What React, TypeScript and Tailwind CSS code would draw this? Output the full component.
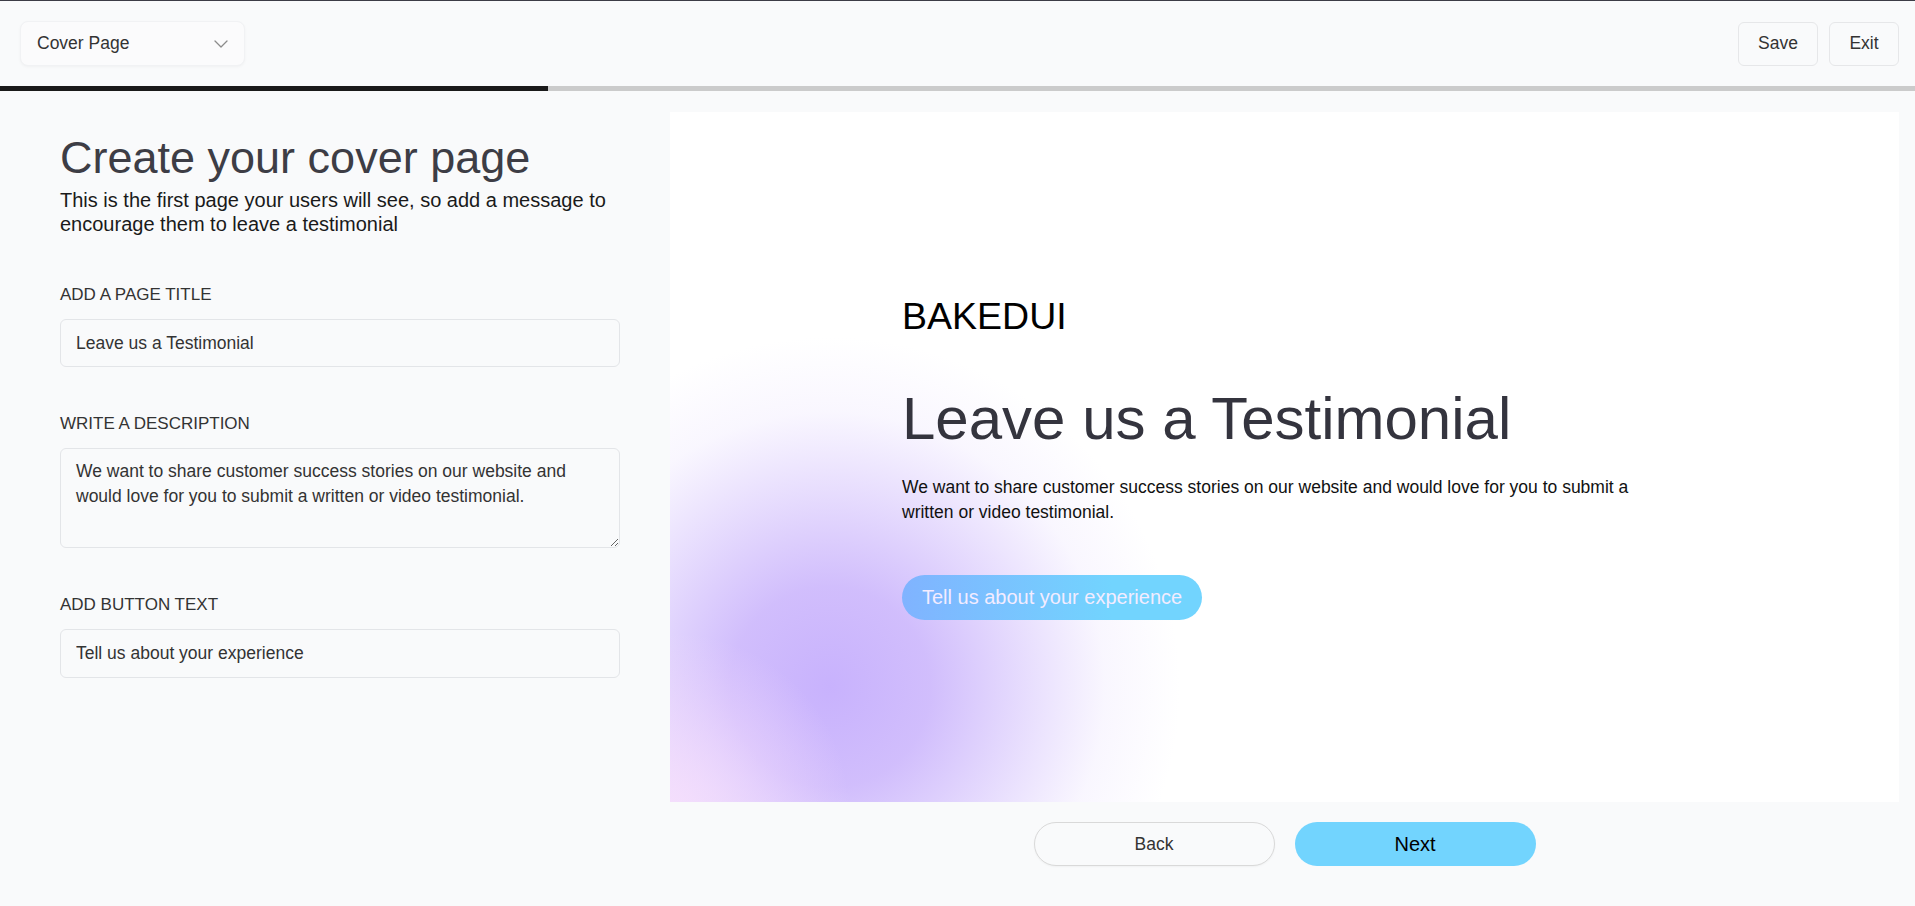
import React from "react";

function ChevronDown() {
  return (
    <svg width="14" height="8" viewBox="0 0 14 8" fill="none">
      <path d="M1 1l6 6 6-6" stroke="#8b8b8b" strokeWidth="1.3" strokeLinecap="round" strokeLinejoin="round" />
    </svg>
  );
}

function Field({ label, className, children }: { label: string; className: string; children: React.ReactNode }) {
  return (
    <div className={"flex flex-col " + className}>
      <label className="mb-[14px] text-[17px] leading-5 uppercase text-[#333]">{label}</label>
      {children}
    </div>
  );
}

export default function App() {
  return (
    <div className="min-h-screen bg-[#f9fafb] font-['Liberation_Sans',Arial,sans-serif] text-[#333] border-t border-[#3c3c46]">
      {/* top bar */}
      <header className="flex h-[85px] items-center justify-between pl-5 pr-4">
        <button className="flex h-[45px] w-[225px] items-center justify-between rounded-lg border border-[#f1f2f4] bg-[#fbfbfc] pl-4 pr-4 text-[17.5px] text-[#333] shadow-[0_1px_3px_rgba(0,0,0,0.04)]">
          <span>Cover Page</span>
          <ChevronDown />
        </button>
        <div className="flex gap-[11px]">
          <button className="h-[44px] w-[80px] rounded-md border border-[#e6e7e9] bg-[#f9fafb] text-[17.5px] text-[#333]">
            Save
          </button>
          <button className="h-[44px] w-[70px] rounded-md border border-[#e6e7e9] bg-[#f9fafb] text-[17.5px] text-[#333]">
            Exit
          </button>
        </div>
      </header>

      {/* progress */}
      <div className="h-[5px] w-full bg-[#cbcbcb]">
        <div className="h-full w-[548px] bg-[#1a1a1a]" />
      </div>

      <main className="flex pl-[60px] pr-4 pt-[21px]">
        {/* form column */}
        <section className="w-[560px] shrink-0 pt-[23px]">
          <h1 className="text-[45px] leading-none text-[#3d3d45]">Create your cover page</h1>
          <p className="mt-2 text-[20px] leading-6 text-[#1a1a1a]">
            This is the first page your users will see, so add a message to encourage them to leave a testimonial
          </p>

          <Field label="Add a page title" className="mt-[49px]">
            <input
              defaultValue="Leave us a Testimonial"
              className="h-[48px] rounded-md border border-[#e3e5e8] bg-[#f9fafb] px-[15px] text-[17.5px] text-[#333] outline-none"
            />
          </Field>

          <Field label="Write a description" className="mt-[47px]">
            <textarea
              defaultValue="We want to share customer success stories on our website and would love for you to submit a written or video testimonial."
              className="h-[100px] rounded-md border border-[#e3e5e8] bg-[#f9fafb] px-[15px] pt-[10px] text-[17.5px] leading-[25px] text-[#333] outline-none"
            />
          </Field>

          <Field label="Add button text" className="mt-[47px]">
            <input
              defaultValue="Tell us about your experience"
              className="h-[49px] rounded-md border border-[#e3e5e8] bg-[#f9fafb] px-[15px] text-[17.5px] text-[#333] outline-none"
            />
          </Field>
        </section>

        {/* preview column */}
        <section className="ml-[50px] flex flex-1 flex-col">
          <div className="relative flex h-[690px] items-center justify-center overflow-hidden bg-white">
            <div className="pointer-events-none absolute inset-0 bg-[image:radial-gradient(circle_at_0px_700px,rgba(246,222,252,0.9)_0px,rgba(246,222,252,0)_180px),radial-gradient(circle_at_160px_575px,rgba(200,178,253,1)_0px,rgba(205,184,252,0.92)_100px,rgba(220,205,253,0.65)_200px,rgba(238,231,254,0.35)_275px,rgba(255,255,255,0)_350px)]" />
            <div className="relative flex w-[765px] flex-col items-start pt-[4px]">
              <div className="text-[37.5px] leading-none text-black">BAKEDUI</div>
              <h2 className="mt-[53px] text-[60px] leading-none text-[#34343e]">Leave us a Testimonial</h2>
              <p className="mt-[26px] text-[17.5px] leading-[25px] text-[#111]">
                We want to share customer success stories on our website and would love for you to submit a written or
                video testimonial.
              </p>
              <button className="mt-[50px] h-[45px] rounded-full bg-[linear-gradient(90deg,#80b3ff,#72d4fe_70%)] px-5 text-[20px] text-[#f3ecff]">
                Tell us about your experience
              </button>
            </div>
          </div>

          <div className="mt-5 flex justify-center gap-5">
            <button className="h-[44px] w-[241px] rounded-full border border-[#d9d9d9] bg-[#f9fafb] text-[17.5px] text-[#333] shadow-[0_1px_2px_rgba(0,0,0,0.04)]">
              Back
            </button>
            <button className="h-[44px] w-[241px] rounded-full bg-[#72d4fe] text-[20px] text-black">Next</button>
          </div>
        </section>
      </main>
    </div>
  );
}
